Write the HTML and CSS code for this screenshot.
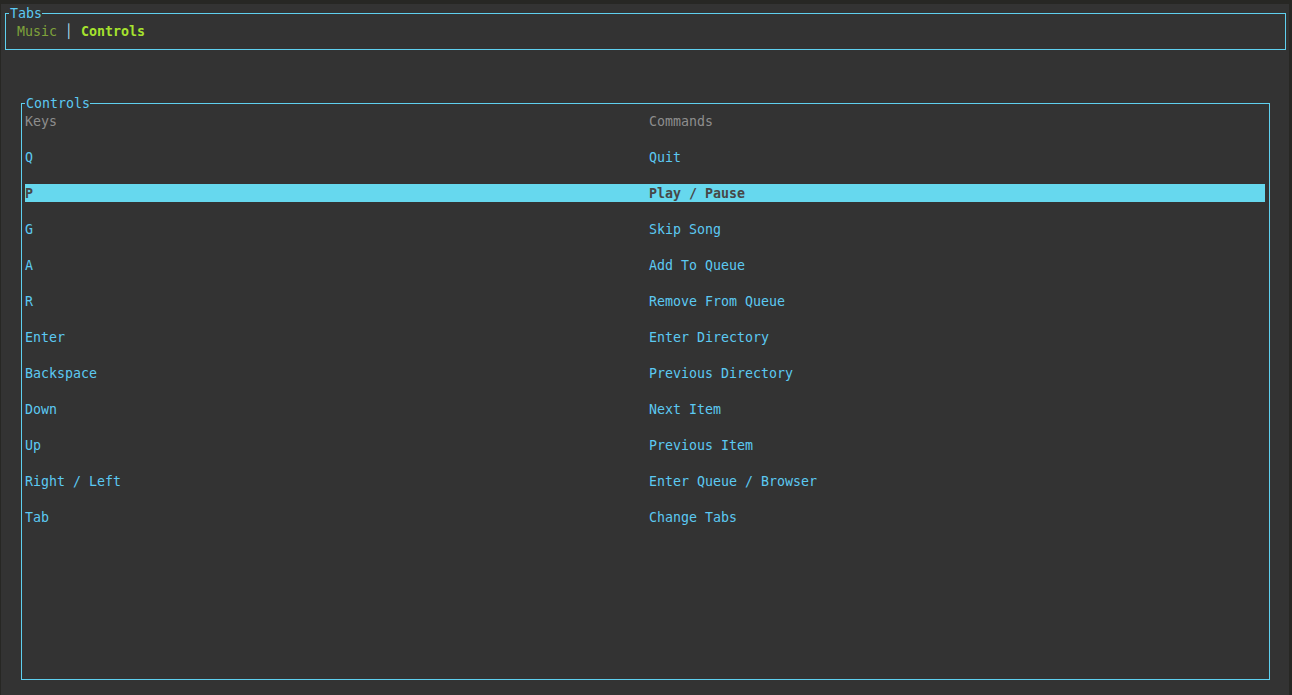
FILE: index.html
```html
<!DOCTYPE html>
<html>
<head>
<meta charset="utf-8">
<title>Controls</title>
<link rel="stylesheet" href="styles.css">
</head>
<body>
<div class="term">
  <div class="box tabs-box">
    <span class="title">Tabs</span>
    <div class="tabs">
      <span class="tab">Music</span>
      <span class="sep">│</span>
      <span class="tab active">Controls</span>
    </div>
  </div>
  <div class="box controls-box">
    <span class="title">Controls</span>
    <div class="table">
      <div class="row head"><span class="key">Keys</span><span class="cmd">Commands</span></div>
      <div class="row"><span class="key">Q</span><span class="cmd">Quit</span></div>
      <div class="row selected"><span class="key">P</span><span class="cmd">Play / Pause</span></div>
      <div class="row"><span class="key">G</span><span class="cmd">Skip Song</span></div>
      <div class="row"><span class="key">A</span><span class="cmd">Add To Queue</span></div>
      <div class="row"><span class="key">R</span><span class="cmd">Remove From Queue</span></div>
      <div class="row"><span class="key">Enter</span><span class="cmd">Enter Directory</span></div>
      <div class="row"><span class="key">Backspace</span><span class="cmd">Previous Directory</span></div>
      <div class="row"><span class="key">Down</span><span class="cmd">Next Item</span></div>
      <div class="row"><span class="key">Up</span><span class="cmd">Previous Item</span></div>
      <div class="row"><span class="key">Right / Left</span><span class="cmd">Enter Queue / Browser</span></div>
      <div class="row"><span class="key">Tab</span><span class="cmd">Change Tabs</span></div>
    </div>
  </div>
</div>
</body>
</html>
```
FILE: styles.css
```css
html, body {
  margin: 0;
  padding: 0;
  background: #272724;
  width: 1292px;
  height: 695px;
  overflow: hidden;
}
.term {
  margin-left: 1px;
  margin-top: 4px;
  width: 1288px;
  height: 691px;
  background: #333333;
  font-family: "DejaVu Sans Mono", "Liberation Mono", monospace;
  font-size: 13.29px;
  line-height: 18px;
  color: #5cc9f2;
  display: flex;
  flex-direction: column;
  white-space: nowrap;
}
.box {
  position: relative;
  border: 1px solid #5fd0ef;
  box-sizing: border-box;
}
.title {
  position: absolute;
  top: -10px;
  left: 3px;
  height: 18px;
  line-height: 20px;
  background: #333333;
  color: #5cc9f2;
  padding-left: 1px;
}
.tabs-box {
  margin-left: 4px;
  margin-top: 9px;
  width: 1281px;
  height: 37px;
  flex: none;
}
.tabs {
  display: flex;
  padding-top: 8px;
  padding-left: 11px;
  gap: 8px;
  height: 18px;
  line-height: 20px;
}
.tab {
  color: #7fa23b;
}
.tab.active {
  color: #a6e22e;
  font-weight: bold;
}
.sep {
  color: #a8dcee;
}
.controls-box {
  margin-left: 20px;
  margin-top: 53px;
  width: 1249px;
  height: 577px;
  flex: none;
}
.table {
  display: flex;
  flex-direction: column;
  gap: 18px;
  padding-top: 8px;
  padding-left: 3px;
  padding-right: 4px;
}
.row {
  display: flex;
  height: 18px;
  line-height: 20px;
}
.key {
  width: 624px;
  flex: none;
}
.row.head {
  color: #8e8e8e;
}
.row.selected {
  background: #66d8ee;
  color: #474747;
  font-weight: bold;
}
```
